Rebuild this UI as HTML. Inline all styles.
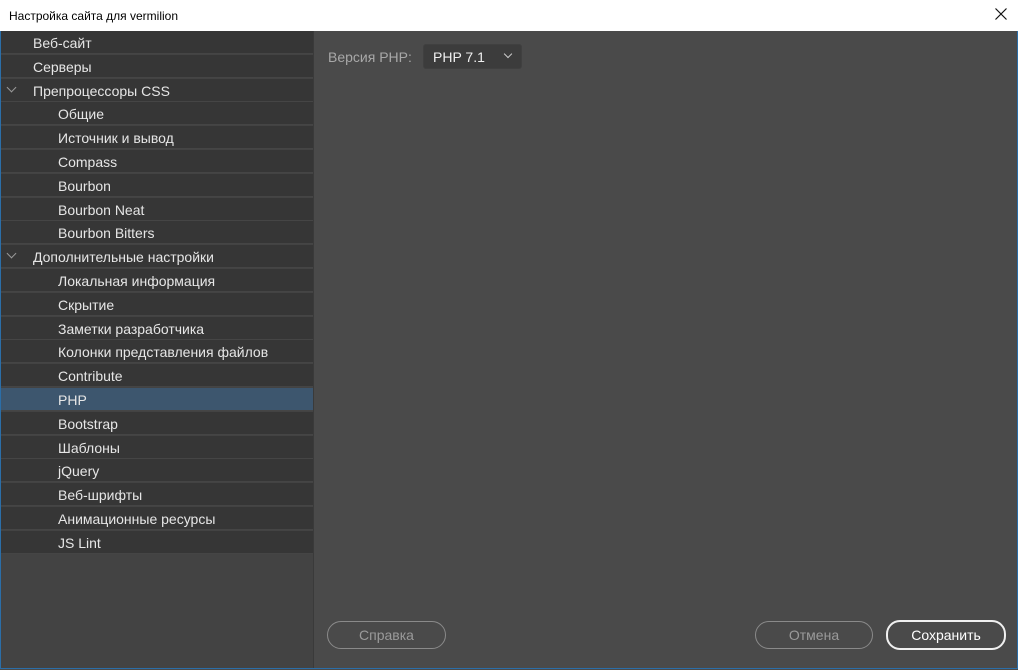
<!DOCTYPE html><html><head><meta charset="utf-8"><style>
body{margin:0;width:1018px;height:670px;overflow:hidden;font-family:"Liberation Sans",sans-serif;background:#4a4a4a;position:relative}
.win{position:absolute;left:0;top:0;width:1016px;height:668px;border:1px solid #2b6ea8;border-top:none;background:#4a4a4a}
.title{position:absolute;left:0;top:0;width:1018px;height:31px;background:#fff;font-size:12px;color:#000}
.title span{position:absolute;left:9px;top:9px}
.x{position:absolute;left:995px;top:8px}
.left{position:absolute;left:1px;top:31px;width:312px;height:637px;background:#434343;border-right:1px solid #3a3a3a}
.row{position:absolute;left:0;width:312px;height:23px;background:#363636;border-bottom:1px solid #454545;color:#e6e6e6;font-size:14px;line-height:24px}
.row.sel{background:#3d566e}
.l1{padding-left:32px;box-sizing:border-box}.l2{padding-left:57px;box-sizing:border-box}
.chev{position:absolute;left:7px;top:5px;width:6px;height:6px;border-right:1px solid #999;border-bottom:1px solid #999;transform:rotate(45deg)}
.lbl{position:absolute;left:328px;top:49px;color:#a8a8a8;font-size:14px}
.sel1{position:absolute;left:423px;top:44px;width:99px;height:25px;background:#3c3c3c;border:1px solid #404040;border-radius:3px;color:#f0f0f0;font-size:14px;box-sizing:border-box}
.sel1 span{position:absolute;left:9px;top:4px}
.sel1 i{position:absolute;right:10px;top:6px;width:5px;height:5px;border-right:1px solid #ccc;border-bottom:1px solid #ccc;transform:rotate(45deg)}
.btn{position:absolute;top:621px;height:26px;border:1px solid #8a8a8a;border-radius:14px;color:#9a9a9a;font-size:14px;text-align:center;line-height:26px;box-sizing:content-box}
.save{border:2px solid #f0f0f0;color:#fff;top:620px;line-height:26px}
</style></head><body><div class="win"></div>
<div class="title"><span>Настройка сайта для vermilion</span><svg class="x" width="12" height="12"><path d="M0.5 0.5L11.5 11.5M11.5 0.5L0.5 11.5" stroke="#111" stroke-width="1.2"/></svg></div>
<div class="left">
<div class="row l1" style="top:0">Веб-сайт</div>
<div class="row l1" style="top:23.8px">Серверы</div>
<div class="row l1" style="top:47.6px"><i class="chev"></i>Препроцессоры CSS</div>
<div class="row l2" style="top:71.4px">Общие</div>
<div class="row l2" style="top:95.2px">Источник и вывод</div>
<div class="row l2" style="top:119px">Compass</div>
<div class="row l2" style="top:142.8px">Bourbon</div>
<div class="row l2" style="top:166.6px">Bourbon Neat</div>
<div class="row l2" style="top:190.4px">Bourbon Bitters</div>
<div class="row l1" style="top:214.2px"><i class="chev"></i>Дополнительные настройки</div>
<div class="row l2" style="top:238px">Локальная информация</div>
<div class="row l2" style="top:261.8px">Скрытие</div>
<div class="row l2" style="top:285.6px">Заметки разработчика</div>
<div class="row l2" style="top:309.4px">Колонки представления файлов</div>
<div class="row l2" style="top:333.2px">Contribute</div>
<div class="row l2 sel" style="top:357px">PHP</div>
<div class="row l2" style="top:380.8px">Bootstrap</div>
<div class="row l2" style="top:404.6px">Шаблоны</div>
<div class="row l2" style="top:428.4px">jQuery</div>
<div class="row l2" style="top:452.2px">Веб-шрифты</div>
<div class="row l2" style="top:476px">Анимационные ресурсы</div>
<div class="row l2" style="top:499.8px">JS Lint</div>
</div>
<div class="lbl">Версия PHP:</div>
<div class="sel1"><span>PHP 7.1</span><i></i></div>
<div class="btn" style="left:327px;width:117px">Справка</div>
<div class="btn" style="left:755px;width:116px">Отмена</div>
<div class="btn save" style="left:886px;width:116px">Сохранить</div>
</body></html>
